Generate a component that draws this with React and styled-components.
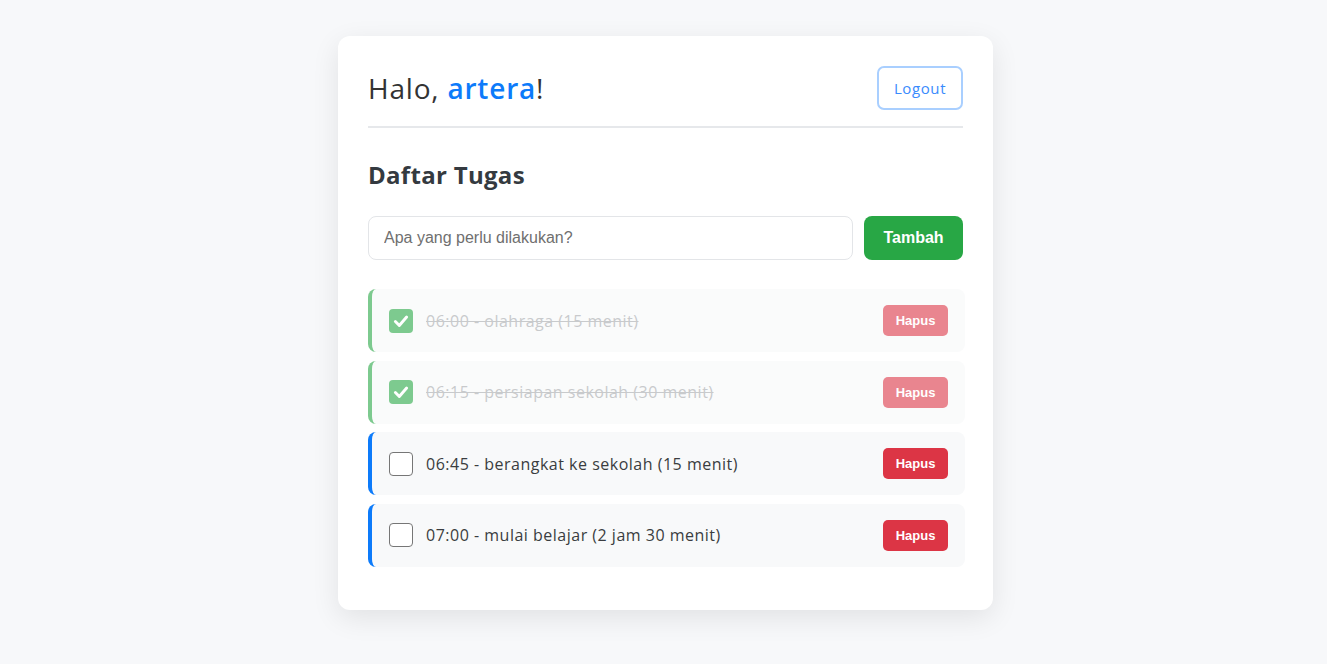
import React, { useState } from "react";
import styled, { createGlobalStyle } from "styled-components";

const Global = createGlobalStyle`
  html, body { margin: 0; padding: 0; }
  body {
    background: #f7f8fa;
    font-family: "Open Sans", "Noto Sans", sans-serif;
    color: #333;
  }
`;

const Page = styled.div`
  min-height: 664px;
  display: flex;
  justify-content: center;
  align-items: flex-start;
  padding: 36px 0 0 4px;
  box-sizing: border-box;
`;

const Card = styled.div`
  width: 655px;
  box-sizing: border-box;
  background: #fff;
  border-radius: 12px;
  box-shadow: 0 8px 28px rgba(0, 0, 0, 0.09);
  padding: 30px 30px 43px;
`;

const Header = styled.div`
  display: flex;
  justify-content: space-between;
  align-items: center;
  padding-bottom: 16px;
  border-bottom: 2px solid #e6e8eb;
`;

const Greeting = styled.h1`
  margin: 0;
  font-size: 28px;
  font-weight: 400;
  color: #333;
  letter-spacing: 0.8px;
`;

const Name = styled.span`
  color: #0d7bfa;
  font-weight: 600;
`;

const LogoutButton = styled.button`
  width: 86px;
  height: 44px;
  border: 2px solid #a9cfff;
  border-radius: 7px;
  background: #fff;
  color: #3a8bfd;
  font-family: "Open Sans", sans-serif;
  font-size: 15px;
  letter-spacing: 0.6px;
  font-weight: 500;
  cursor: pointer;
`;

const Title = styled.h2`
  margin: 29px 0 23px;
  font-size: 24px;
  line-height: 36px;
  font-weight: 700;
  letter-spacing: 0.3px;
  color: #343a40;
`;

const Form = styled.form`
  display: flex;
  gap: 11px;
  margin-bottom: 29px;
`;

const Input = styled.input`
  flex: 1;
  height: 44px;
  box-sizing: border-box;
  border: 1px solid #e3e5e8;
  border-radius: 8px;
  padding: 0 15px;
  font-family: "Liberation Sans", Arial, sans-serif;
  font-size: 16px;
  color: #333;
  outline: none;
  &::placeholder { color: #6f6f6f; }
`;

const AddButton = styled.button`
  width: 99px;
  height: 44px;
  border: none;
  border-radius: 8px;
  background: #28a745;
  color: #fff;
  font-family: "Liberation Sans", Arial, sans-serif;
  font-size: 16px;
  font-weight: 700;
  cursor: pointer;
`;

const List = styled.ul`
  list-style: none;
  margin: 0 -2px 0 0;
  padding: 0;
  display: flex;
  flex-direction: column;
  gap: 8.5px;
`;

const Item = styled.li`
  display: flex;
  align-items: center;
  height: 63px;
  box-sizing: border-box;
  padding: 0 17px;
  background: #f8f9fa;
  border-radius: 8px;
  border-left: 4px solid ${(p) => (p.$done ? "#28a745" : "#0d7bfa")};
  opacity: ${(p) => (p.$done ? 0.6 : 1)};
`;

const Check = styled.span`
  width: 24px;
  height: 24px;
  box-sizing: border-box;
  border-radius: 4px;
  flex-shrink: 0;
  display: flex;
  align-items: center;
  justify-content: center;
  background: ${(p) => (p.$checked ? "#28a745" : "#fff")};
  border: ${(p) => (p.$checked ? "none" : "1.5px solid #767676")};
  cursor: pointer;
`;

const Text = styled.span`
  flex: 1;
  margin-left: 13px;
  font-size: 16px;
  letter-spacing: 0.5px;
  color: ${(p) => (p.$done ? "#a4a7ab" : "#3a3d40")};
  text-decoration: ${(p) => (p.$done ? "line-through" : "none")};
`;

const DeleteButton = styled.button`
  width: 65px;
  height: 31px;
  border: none;
  border-radius: 5px;
  background: #dc3545;
  color: #fff;
  font-family: "Liberation Sans", Arial, sans-serif;
  font-size: 13px;
  font-weight: 700;
  cursor: pointer;
`;

const initial = [
  { id: 1, text: "06:00 - olahraga (15 menit)", done: true },
  { id: 2, text: "06:15 - persiapan sekolah (30 menit)", done: true },
  { id: 3, text: "06:45 - berangkat ke sekolah (15 menit)", done: false },
  { id: 4, text: "07:00 - mulai belajar (2 jam 30 menit)", done: false },
];

export default function App() {
  const [todos, setTodos] = useState(initial);
  const toggle = (id) =>
    setTodos((t) => t.map((x) => (x.id === id ? { ...x, done: !x.done } : x)));

  return (
    <Page>
      <Global />
      <Card>
        <Header>
          <Greeting>
            Halo, <Name>artera</Name>!
          </Greeting>
          <LogoutButton>Logout</LogoutButton>
        </Header>
        <Title>Daftar Tugas</Title>
        <Form onSubmit={(e) => e.preventDefault()}>
          <Input placeholder="Apa yang perlu dilakukan?" />
          <AddButton type="submit">Tambah</AddButton>
        </Form>
        <List>
          {todos.map((t) => (
            <Item key={t.id} $done={t.done}>
              <Check $checked={t.done} onClick={() => toggle(t.id)}>
                {t.done && (
                  <svg width="18" height="18" viewBox="0 0 16 16">
                    <path
                      d="M3 8.5 L6.5 12 L13 4.5"
                      fill="none"
                      stroke="#fff"
                      strokeWidth="2.6"
                      strokeLinecap="round"
                      strokeLinejoin="round"
                    />
                  </svg>
                )}
              </Check>
              <Text $done={t.done}>{t.text}</Text>
              <DeleteButton>Hapus</DeleteButton>
            </Item>
          ))}
        </List>
      </Card>
    </Page>
  );
}
